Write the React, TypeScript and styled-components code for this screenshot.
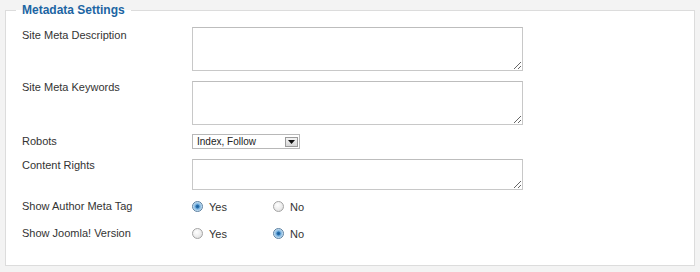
import React, { useState } from 'react';
import styled, { createGlobalStyle } from 'styled-components';

const GlobalStyle = createGlobalStyle`
  html, body {
    margin: 0;
    padding: 0;
    background: #f3f3f3;
    font-family: 'Liberation Sans', Arial, sans-serif;
  }
`;

// Outer page area, grey around the fieldset
const Page = styled.div`
  width: 700px;
  height: 272px;
  box-sizing: border-box;
  padding: 2px 5px 0 5px;
  background: #f3f3f3;
`;

const Fieldset = styled.fieldset`
  margin: 0;
  padding: 4px 10px 18px 10px;
  border: 1px solid #dcdcdc;
  background: #fff;
  min-width: 0;
`;

const Legend = styled.legend`
  padding: 0 6px;
  font-size: 12px;
  line-height: 16px;
  font-weight: bold;
  color: #1c65a3;
`;

// One label / field row
const Row = styled.div<{ $compact?: boolean; $tight?: boolean }>`
  display: grid;
  grid-template-columns: 170px 1fr;
  align-items: ${p => (p.$compact ? 'center' : 'start')};
  padding: ${p => (p.$compact ? '0' : p.$tight ? '5px 0 3px' : '5px 0')};
  height: ${p => (p.$compact ? '27px' : 'auto')};
  padding-left: 6px;
`;

const Label = styled.label<{ $top?: number }>`
  font-size: 11px;
  line-height: 13px;
  color: #333;
  padding-top: ${p => p.$top ?? 0}px;
`;

const TextArea = styled.textarea<{ $h: number }>`
  display: block;
  width: 331px;
  height: ${p => p.$h}px;
  box-sizing: border-box;
  margin: 0;
  border: 1px solid #c8c8c8;
  border-top-color: #bdbdbd;
  background: #fff;
  font-family: 'Liberation Sans', Arial, sans-serif;
  font-size: 11px;
  padding: 2px;
  outline: none;
`;

// Old-style select box with a boxed arrow button
const SelectBox = styled.div`
  display: flex;
  align-items: center;
  justify-content: space-between;
  width: 108px;
  height: 15px;
  box-sizing: border-box;
  margin-top: -1px;
  border: 1px solid #b8b8b8;
  background: #fff;
  padding: 0 1px 0 4px;
  font-size: 10px;
  color: #222;
  cursor: default;
`;

const ArrowButton = styled.span`
  display: flex;
  align-items: center;
  justify-content: center;
  width: 13px;
  height: 10px;
  box-sizing: border-box;
  border: 1px solid #9a9a9a;
  background: linear-gradient(#f4f4f4, #d6d6d6);
`;

const RadioGroup = styled.div`
  display: flex;
  align-items: center;
`;

const RadioOption = styled.label`
  display: flex;
  align-items: center;
  width: 81px;
  font-size: 11px;
  color: #333;
  cursor: pointer;
`;

const RadioInput = styled.input`
  appearance: none;
  margin: 0 6px 0 0;
  width: 11px;
  height: 11px;
  border-radius: 50%;
  border: 1px solid #a4a4a4;
  background: radial-gradient(circle at 40% 35%, #ffffff 0%, #ececec 55%, #d2d2d2 100%);
  box-sizing: border-box;
  cursor: pointer;

  &:checked {
    border-color: #5b7fa0;
    background: radial-gradient(circle at 50% 50%, #1a5b95 0%, #2f78b7 28%, #6aa7d8 34%, #c8e2f5 70%, #e4f1fb 100%);
  }
`;

interface RadioRowProps {
  name: string;
  value: string;
  onChange: (v: string) => void;
}

const YesNo: React.FC<RadioRowProps> = ({ name, value, onChange }) => (
  <RadioGroup>
    {['Yes', 'No'].map(opt => (
      <RadioOption key={opt}>
        <RadioInput
          type="radio"
          name={name}
          checked={value === opt}
          onChange={() => onChange(opt)}
        />
        {opt}
      </RadioOption>
    ))}
  </RadioGroup>
);

const App: React.FC = () => {
  const [author, setAuthor] = useState('Yes');
  const [version, setVersion] = useState('No');

  return (
    <Page>
      <GlobalStyle />
      <Fieldset>
        <Legend>Metadata Settings</Legend>

        <Row>
          <Label $top={2}>Site Meta Description</Label>
          <TextArea $h={44} />
        </Row>
        <Row>
          <Label>Site Meta Keywords</Label>
          <TextArea $h={44} />
        </Row>
        <Row>
          <Label>Robots</Label>
          <SelectBox>
            <span>Index, Follow</span>
            <ArrowButton>
              <svg width="7" height="4" viewBox="0 0 7 4">
                <path d="M0 0 L7 0 L3.5 4 Z" fill="#111" />
              </svg>
            </ArrowButton>
          </SelectBox>
        </Row>
        <Row $tight>
          <Label>Content Rights</Label>
          <TextArea $h={31} />
        </Row>
        <Row $compact>
          <Label>Show Author Meta Tag</Label>
          <YesNo name="author" value={author} onChange={setAuthor} />
        </Row>
        <Row $compact>
          <Label>Show Joomla! Version</Label>
          <YesNo name="version" value={version} onChange={setVersion} />
        </Row>
      </Fieldset>
    </Page>
  );
};

export default App;
